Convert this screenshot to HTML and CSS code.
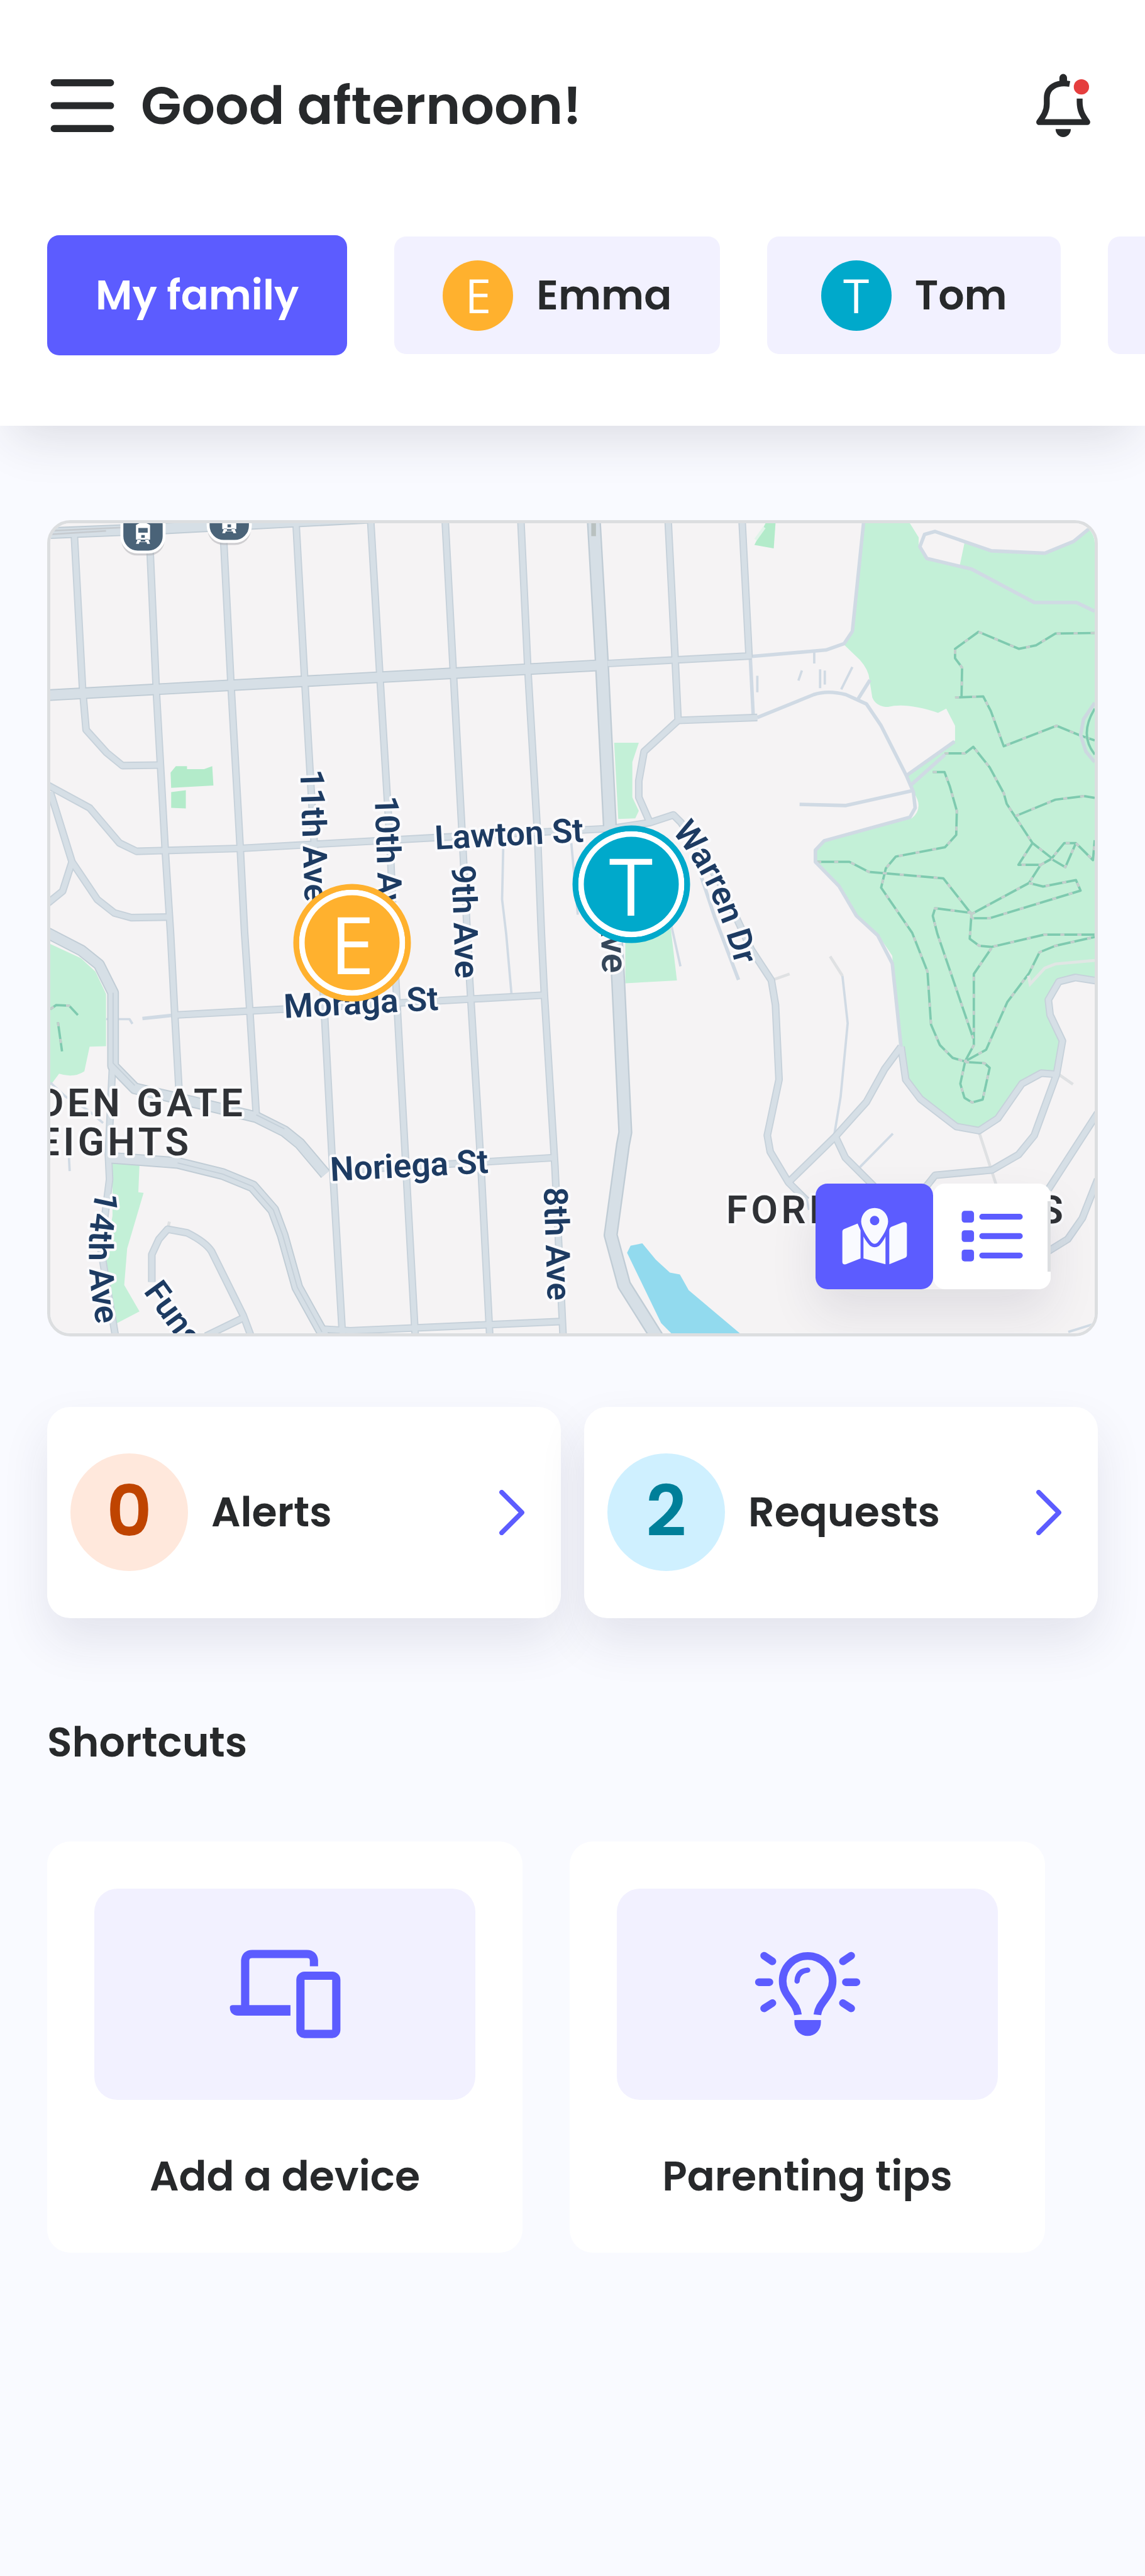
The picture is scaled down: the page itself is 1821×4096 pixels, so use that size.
FILE: index.html
```html
<!DOCTYPE html>
<html lang="en">
<head>
    <meta charset="UTF-8">
    <meta name="viewport" content="width=device-width, initial-scale=1.0">
    <title>My family</title>
    <link rel="stylesheet" href="styles.css">
</head>
<body>
    <header class="header">
        <div class="topbar">
            <button class="icon-btn" aria-label="Menu">
                <svg viewBox="0 0 120 120" fill="none" stroke="#27292b" stroke-width="12" stroke-linecap="round">
                    <path d="M12 21H108M12 60H108M12 99H108"/>
                </svg>
            </button>
            <h1>Good afternoon!</h1>
            <button class="icon-btn" aria-label="Notifications">
                <svg viewBox="10 10 120 120" fill="#27292b">
                    <path d="M64.500 33V22.500a6.500 6.500 0 0 1 13 0V33z"/>
                    <path d="M82 33C60 29 43 39 43 57V67C43 80 37 88 30 98H112C105 88 99 80 99 63V58" fill="none" stroke="#27292b" stroke-width="10" stroke-linejoin="round"/>
                    <path d="M58 110H84a13 13.500 0 0 1-26 0z"/>
                    <circle cx="102" cy="38" r="13" fill="#e53e3e"/>
                </svg>
            </button>
        </div>
        <nav class="tabs">
            <button class="tab active">My family</button>
            <button class="tab"><span class="avatar emma">E</span>Emma</button>
            <button class="tab"><span class="avatar tom">T</span>Tom</button>
            <button class="tab" aria-label="More"></button>
        </nav>
    </header>

    <main>
        <section class="map">
            <svg class="map-canvas" viewBox="85 890 1780 1380" preserveAspectRatio="xMidYMid slice">
                <defs>
                    <path id="warren" d="M1144 1416Q1212 1492 1252 1640"/>
                    <path id="ave14" d="M164 2026Q136 2130 168 2275"/>
                    <g id="tram">
                        <rect x="-37" y="-70" width="74" height="74" rx="27" fill="#a9a9ae" opacity=".5"/>
                        <rect x="-36" y="-75" width="72" height="73" rx="27" fill="#4a6378" stroke="#fff" stroke-width="5"/>
                        <path fill="#fff" fill-rule="evenodd" d="M-12-48Q0-56 12-48V-23H-12zM-8-43V-35H8V-43zM-3-31V-26H3V-31zM-9-24H-4V-20H4V-24H9L12-16H7L6-19H-6L-7-16H-12z"/>
                    </g>
                    <g id="trails">
                        <path d="M1865 1077L1798 1078L1765 1098L1736 1104L1667 1075L1627 1104V1120L1639 1136L1638 1187"/>
                        <path d="M1627 1187L1675 1185L1688 1210L1710 1270L1800 1235L1841 1252L1865 1260"/>
                        <path d="M1609 1282H1644L1658 1271L1686 1306L1710 1350L1715 1368L1759 1435L1791 1460"/>
                        <path d="M1730 1389L1798 1361L1847 1355L1865 1358"/>
                        <path d="M1589 1314H1609L1618 1338L1630 1380L1629 1421L1610 1442L1526 1458L1509 1478L1501 1511L1554 1588L1580 1654L1586 1744L1601 1779L1623 1801L1644 1807"/>
                        <path d="M1392 1467H1447L1480 1484L1607 1495L1655 1556"/>
                        <path d="M1655 1556L1753 1503L1773 1472H1735L1759 1435"/>
                        <path d="M1753 1503L1777 1509L1833 1498L1841 1516L1686 1563H1655"/>
                        <path d="M1773 1472L1791 1462L1813 1435H1833L1815 1476L1791 1462M1833 1435L1862 1464L1865 1430"/>
                        <path d="M1655 1556L1652 1598L1668 1610L1689 1612L1779 1591H1865"/>
                        <path d="M1655 1554L1593 1546L1589 1559L1597 1590L1658 1768"/>
                        <path d="M1689 1614L1659 1658V1779L1644 1807L1680 1787L1716 1706L1753 1657L1771 1621L1798 1610L1865 1595"/>
                        <path d="M1644 1808L1677 1810L1686 1818L1674 1872L1656 1877L1643 1869L1636 1845z"/>
                        <path d="M85 1718L95 1711L117 1712L132 1728M98 1740L105 1790"/>
                    </g>
                    <g id="streets">
                        <path d="M126 911L140 1173L146 1242L181 1281L208 1303L274 1302"/>
                        <path d="M253 890L266 1182L281 1449L290 1590L297 1725L304 1850"/>
                        <path d="M379 890L393 1166L409 1449L416 1586L425 1720L436 1897"/>
                        <path d="M504 893L519 1164L535 1439L553 1739L566 1985L583 2275"/>
                        <path d="M631 885L647 1155L664 1435L674 1673L691 1985L707 2275"/>
                        <path d="M758 885L772 1146L787 1421L800 1673L819 1985L834 2275"/>
                        <path d="M887 885L899 1141L915 1412L922 1590L927 1692L945 1985L959 2275"/>
                        <path d="M1138 885L1150 1123L1155 1226L1097 1279L1088 1329V1357L1106 1398"/>
                        <path d="M1264 885L1276 1118M1035 1129L1280 1116M1155 1226L1290 1221"/>
                        <path d="M80 1336L152 1375L203 1435L232 1449L409 1444L736 1426L1042 1410L1107 1400L1147 1387L1160 1400L1225 1500L1280 1617L1314 1669L1321 1711L1327 1838L1307 1933L1312 1961L1343 2013L1374 2044"/>
                        <path d="M85 1348L122 1467L165 1531L194 1554L223 1562L288 1561M122 1467L106 1517L80 1538"/>
                        <path d="M297 1728L927 1694M566 1994L943 1971"/>
                        <path d="M191 1815L184 1966L186 2008L171 2126L196 2275"/>
                        <path d="M258 2183V2136L270 2110L285 2093L318 2099Q350 2115 360 2131L414 2240L427 2275M414 2244L350 2275M548 2263L596 2266L959 2250"/>
                        <path d="M1535 1782L1543 1838L1568 1871L1629 1918L1668 1925L1700 1904L1741 1845L1774 1827L1800 1829"/>
                        <path d="M1870 1670L1832 1664L1804 1671L1786 1702L1789 1728L1810 1772L1800 1829L1762 1933L1735 1966L1690 1992L1593 2001L1570 2030"/>
                        <path d="M1535 1782L1507 1820L1476 1876L1423 1935L1343 2013M1423 1935L1440 1971L1495 2026"/>
                        <path d="M1870 1895L1786 2025M1870 2008L1844 2074L1819 2110L1780 2134"/>
                    </g>
                    <g id="roads">
                        <path d="M80 907L277 899L640 880M80 1183L1022 1132"/>
                        <path d="M80 1588L138 1618L168 1642L192 1690V1815L229 1853L328 1876L436 1902L484 1926L510 1947L554 1999"/>
                        <path d="M184 1971L302 1980L379 1999L430 2020L465 2060L481 2103L506 2192L552 2275"/>
                    </g>
                    <path id="avenue" d="M1011 880L1025 1127L1039 1412L1053 1673L1065 1928L1061 1949L1040 2103L1063 2188L1124 2285"/>
                </defs>
                <rect x="85" y="890" width="1780" height="1380" fill="#f5f3f4"/>

                <!-- parks and water -->
                <g fill="#c3f0d7">
                    <path d="M1471 890L1452 1074L1438 1097L1465 1123Q1480 1140 1481 1156L1486 1187Q1493 1203 1513 1203Q1544 1195 1598 1213L1612 1206L1627 1235V1260L1547 1320L1556 1348Q1575 1375 1553 1393L1404 1432L1389 1449V1467L1429 1508L1459 1559L1495 1590L1520 1627L1532 1782L1547 1838L1568 1871L1629 1916L1668 1923L1698 1904L1741 1845L1774 1827H1795L1807 1772L1786 1725V1702L1804 1671L1832 1664L1865 1669V900L1853 898L1829 921L1780 941L1689 937L1643 924L1635 962L1579 950L1565 930V914L1550 890z"/>
                    <path d="M85 1607L137 1631L162 1654L180 1692V1781L152 1782L143 1824Q125 1836 100 1828L85 1848z"/>
                    <path d="M191 1980L237 1983L235 2030L244 2031L216 2126L211 2188L237 2233L197 2254L191 2221L176 2159L191 2070z"/>
                    <path d="M1046 1264H1088L1077 1297V1357L1088 1380L1082 1393L1053 1394z"/>
                    <path d="M1065 1560H1140L1153 1669L1065 1674z"/>
                </g>
                <g fill="#b3ebca">
                    <path d="M299 1304H318V1309H347L361 1304L363 1337L291 1341L290 1315z"/>
                    <path d="M291 1348L316 1345V1376L291 1375z"/>
                    <path d="M1304 890H1321L1318 933L1285 927z"/>
                </g>
                <path d="M1302 897L1287 918" stroke="#e2f4ea" stroke-width="5"/>
                <path fill="#92daee" d="M1074 2121L1094 2117L1117 2145L1141 2167L1158 2170L1173 2197L1261 2271H1144L1126 2253L1068 2133z"/>

                <!-- footpaths -->
                <use href="#trails" class="trail"/>
                <use href="#trails" class="trail-dash"/>
                <path d="M1865 1635L1798 1641L1780 1648L1755 1675L1752 1661" fill="none" stroke="#e0e6e4" stroke-width="5"/>
                <path d="M1865 1196L1846 1224L1841 1251L1850 1279L1865 1297" fill="none" stroke="#cdd8e0" stroke-width="6"/>
                <path d="M1865 1206Q1838 1250 1865 1284" fill="none" stroke="#7ecaaf" stroke-width="4"/>

                <!-- lanes -->
                <g class="lane">
                    <path d="M1862 894L1829 921L1780 941L1689 937L1593 904L1575 909L1567 930L1579 950L1655 968L1762 1025H1834L1865 1040"/>
                    <path d="M1471 890L1452 1074L1438 1095L1407 1106L1280 1117M1278 1118L1283 1217"/>
                    <path d="M1290 1221L1386 1182Q1410 1174 1441 1182L1476 1198L1501 1235L1544 1320L1556 1348L1559 1375L1550 1391L1404 1431L1389 1447V1467L1429 1508L1459 1559L1495 1592L1520 1640L1535 1782"/>
                    <path d="M1362 1369L1441 1371L1553 1346M1544 1320L1626 1262M1552 1336L1610 1284M1482 1157L1462 1189"/>
                    <path d="M1186 1467L1217 1560L1258 1668M242 1734L297 1728"/>
                </g>
                <g class="lane thin">
                    <path d="M1387 1109V1129M1397 1139V1171M1405 1141V1165M1452 1135L1433 1173M1366 1141L1360 1158M1290 1150V1178"/>
                    <path d="M857 1440L855 1531L862 1590L871 1692M973 1435L984 1557M1140 1560L1159 1645"/>
                    <path d="M1435 1661L1444 1742L1432 1867L1421 1933M1521 1930L1465 1987"/>
                    <path d="M85 1843L111 1867L149 1890L175 1912M115 1937L118 1994M180 1735H220L225 1743M1374 2041L1378 2060M1820 2268L1865 2254"/>
                </g>
                <path class="lane service" d="M1414 1628L1435 1661M1668 1928L1698 2020M1314 1669L1345 1658M1802 1828L1828 1846M285 2093L288 2080"/>

                <!-- streets: outline first, then fill -->
                <use href="#streets" class="street"/>
                <use href="#roads" class="road"/>
                <use href="#avenue" class="avenue"/>
                <use href="#streets" class="street-fill"/>
                <use href="#roads" class="road-fill"/>
                <use href="#avenue" class="avenue-fill"/>
                <path d="M85 903L277 894M85 909L180 903" stroke="#c6cbd0" stroke-width="3"/>
                <path d="M192 1690V1810L229 1848M436 1898L484 1922M302 1980L379 1999L430 2020L465 2060L481 2103L506 2192L548 2268" fill="none" stroke="#c5d0d9" stroke-width="2"/>
                <path d="M1011 890V912" stroke="#b9c1c0" stroke-width="8"/>

                <use href="#tram" x="243" y="941"/>
                <use href="#tram" x="390" y="923"/>

                <g class="street-name">
                    <text transform="translate(741 1446) rotate(-3)">Lawton St</text>
                    <text transform="translate(511 1310) rotate(88)">11th Ave</text>
                    <text transform="translate(638 1355) rotate(88)">10th Ave</text>
                    <text transform="translate(769 1473) rotate(88)">9th Ave</text>
                    <text transform="translate(484 1733) rotate(-3)">Moraga St</text>
                    <text transform="translate(563 2011) rotate(-3)">Noriega St</text>
                    <text transform="translate(926 2022) rotate(88)">8th Ave</text>
                    <text transform="translate(243 2199) rotate(54)">Funston Ave</text>
                    <text class="main-name" transform="translate(1026 1657) rotate(88)">7th Ave</text>
                    <text><textPath href="#warren">Warren Dr</textPath></text>
                    <text><textPath href="#ave14">1<tspan dx="6">4th Ave</tspan></textPath></text>
                </g>
                <g class="district">
                    <text class="end" x="419" y="1901">GOLDEN GATE</text>
                    <text class="end" x="327" y="1967">HEIGHTS</text>
                    <text x="1237" y="2083">FOREST KNOLLS</text>
                </g>
            </svg>
            <button class="marker marker-emma emma">E</button>
            <button class="marker marker-tom tom">T</button>
            <div class="view-toggle">
                <button class="view-btn selected" aria-label="Map view">
                    <svg viewBox="70 60 120 110" fill="#f9faff">
                        <path d="M75 108Q75 104 78 103L101 93.500L106 105V153L81 163Q75 164 75 159z"/>
                        <path d="M111 115.500C114 122 120 129 123 132Q130 136 137 132C140 129 146 122 148.500 115.500V163L111 153z"/>
                        <path d="M155 106Q155 101 159 99L178 91.500Q185 90 185 96V147Q185 151 182 152L155 163z"/>
                        <path fill-rule="evenodd" d="M130 67A23 23 0 0 1 153 90C153 100 143 117 135 126Q130 130 125 126C117 117 107 100 107 90A23 23 0 0 1 130 67zM130 80.500A8 8 0 0 0 130 96.500A8 8 0 0 0 130 80.500z"/>
                    </svg>
                </button>
                <button class="view-btn list" aria-label="List view">
                    <svg viewBox="270 60 120 110" fill="#5c5cff">
                        <rect x="278" y="72" width="21" height="20" rx="5"/>
                        <rect x="278" y="105" width="21" height="20" rx="5"/>
                        <rect x="278" y="138" width="21" height="20" rx="5"/>
                        <rect x="308" y="77" width="74" height="10" rx="5"/>
                        <rect x="308" y="110" width="74" height="10" rx="5"/>
                        <rect x="308" y="143" width="74" height="10" rx="5"/>
                    </svg>
                </button>
            </div>
        </section>

        <section class="stats">
            <a class="stat" href="#alerts">
                <span class="count alerts">0</span>
                <span class="stat-name">Alerts</span>
                <svg class="chevron" viewBox="0 0 42 76"><path d="M4 4L38 38L4 72"/></svg>
            </a>
            <a class="stat" href="#requests">
                <span class="count requests">2</span>
                <span class="stat-name">Requests</span>
                <svg class="chevron" viewBox="0 0 42 76"><path d="M4 4L38 38L4 72"/></svg>
            </a>
        </section>

        <h2>Shortcuts</h2>
        <section class="shortcuts">
            <a class="shortcut" href="#device">
                <span class="tile">
                    <svg viewBox="5 -5 200 200" fill="none" stroke="#5c5cff" stroke-width="14">
                        <path d="M37 116V38Q38 27 49 27H142Q153 27 154 38V48"/>
                        <path d="M16 114H114V132H25Q11 131 11 118Q11 114 16 114z" fill="#5c5cff" stroke="none"/>
                        <rect x="131" y="64" width="61" height="99" rx="7"/>
                    </svg>
                </span>
                <span class="shortcut-name">Add a device</span>
            </a>
            <a class="shortcut" href="#tips">
                <span class="tile">
                    <svg viewBox="5 -5 200 200" fill="none" stroke="#5c5cff" stroke-width="13">
                        <path d="M88.500 130.500C86 108 62.500 99 62.500 73A42.500 42.500 0 0 1 147.500 73C147.500 99 124 108 121.500 130.500"/>
                        <path d="M87 73Q88 56 105 54.500" stroke-width="9" stroke-linecap="round"/>
                        <path d="M82.500 139.500H127.500V144A22.500 22.500 0 0 1 82.500 144z" fill="#5c5cff" stroke="none"/>
                        <path d="M31 30L45 39.500M22 75H40M31 119.500L45 110.500M179 30L165 39.500M170 75H188M179 119.500L165 110.500" stroke-linecap="round"/>
                    </svg>
                </span>
                <span class="shortcut-name">Parenting tips</span>
            </a>
        </section>
    </main>
</body>
</html>
```
FILE: styles.css
```css
* {
    box-sizing: border-box;
}
body {
    margin: 0;
    min-height: 100vh;
    font-family: Poppins, Inter, sans-serif;
    font-size: 65px;
    font-weight: 600;
    line-height: 98px;
    color: #27292b;
    background-color: #f9faff;
    overflow-x: hidden;
}
button {
    padding: 0;
    border: none;
    background: none;
    font: inherit;
    color: inherit;
    cursor: pointer;
}
a {
    color: inherit;
    text-decoration: none;
}
svg {
    display: block;
}

/* Header */
.header {
    padding: 112px 0 112px 75px;
    background-color: white;
    box-shadow: 0 37px 75px -19px rgba(39, 41, 60, 0.14);
}
.topbar {
    display: flex;
    align-items: center;
    gap: 37px;
    padding-right: 75px;
}
.topbar h1 {
    flex: 1;
    margin: 0;
    font-size: 84px;
    font-weight: 600;
    line-height: 112px;
}
.icon-btn svg {
    width: 112px;
    height: 112px;
}
.tabs {
    display: flex;
    align-items: center;
    gap: 75px;
    height: 191px;
    margin-top: 150px;
    overflow: hidden;
}
.tab {
    display: flex;
    flex: none;
    align-items: center;
    justify-content: center;
    gap: 37px;
    min-width: 467px;
    height: 187px;
    padding: 0 77px;
    border-radius: 19px;
    background-color: #f2f1ff;
}
.tab.active {
    height: 191px;
    color: white;
    background-color: #5c5cff;
}
.avatar {
    width: 112px;
    height: 112px;
    border-radius: 50%;
    font-family: "Open Sans", sans-serif;
    font-size: 75px;
    font-weight: 400;
    line-height: 110px;
    text-align: center;
    color: white;
}
.emma {
    background-color: #ffb12e;
}
.tom {
    background-color: #00a9cb;
}

main {
    padding: 150px 75px 75px;
}

/* Map */
.map {
    position: relative;
    border: 5px solid #dcdee0;
    border-radius: 37px;
    overflow: hidden;
}
.map-canvas {
    width: 100%;
    height: auto;
}
.trail,
.trail-dash,
.lane,
.street,
.street-fill,
.road,
.road-fill,
.avenue,
.avenue-fill {
    fill: none;
    stroke-linejoin: round;
}
.trail {
    stroke: #7ecaaf;
    stroke-width: 4px;
}
.trail-dash {
    stroke: #c3cfcc;
    stroke-width: 4px;
    stroke-dasharray: 7 22;
}
.lane {
    stroke: #d0dae4;
    stroke-width: 6px;
}
.lane.thin {
    stroke-width: 4px;
}
.lane.service {
    stroke: #dfe1e3;
    stroke-width: 5px;
}
.street {
    stroke: #c6d1da;
    stroke-width: 13px;
}
.street-fill {
    stroke: #d6dfe6;
    stroke-width: 9px;
}
.road {
    stroke: #c0ccd5;
    stroke-width: 20px;
}
.road-fill {
    stroke: #d6dfe6;
    stroke-width: 16px;
}
.avenue {
    stroke: #c0ccd5;
    stroke-width: 24px;
}
.avenue-fill {
    stroke: #d6dfe6;
    stroke-width: 19px;
}
.street-name {
    font-family: Roboto, sans-serif;
    font-size: 57px;
    font-weight: 600;
    fill: #1d3b62;
    stroke: #fafafc;
    stroke-width: 9px;
    stroke-linejoin: round;
    paint-order: stroke;
}
.main-name {
    font-size: 62px;
    fill: #35475a;
    text-anchor: end;
}
.district {
    font-family: Roboto, sans-serif;
    font-size: 66px;
    font-weight: 600;
    letter-spacing: 6px;
    fill: #303236;
    stroke: #fafafc;
    stroke-width: 9px;
    stroke-linejoin: round;
    paint-order: stroke;
}
.district .end {
    text-anchor: end;
}
.marker {
    position: absolute;
    width: 187px;
    height: 187px;
    border-radius: 50%;
    box-shadow: inset 0 0 0 9px currentColor;
    font-family: "Open Sans", sans-serif;
    font-size: 127px;
    font-weight: 400;
    line-height: 157px;
    text-align: center;
    color: white;
    transform: translate(-50%, -50%);
}
.marker-emma {
    left: 28.9%;
    top: 51.8%;
    border: 9px solid #ffb12e;
}
.marker-tom {
    left: 55.6%;
    top: 44.6%;
    border: 9px solid #00a9cb;
}
.view-toggle {
    position: absolute;
    right: 70px;
    bottom: 70px;
    display: flex;
    border-radius: 19px;
    box-shadow: 0 37px 75px rgba(39, 41, 80, 0.1);
}
.view-btn {
    display: flex;
    align-items: center;
    justify-content: center;
    width: 187px;
    height: 168px;
    border-radius: 19px;
    background-color: white;
}
.view-btn.selected {
    background-color: #5c5cff;
}
.view-btn.list {
    background-image: linear-gradient(#dcdee0, #dcdee0);
    background-position: right center;
    background-repeat: no-repeat;
    background-size: 5px 112px;
}
.view-btn svg {
    width: 112px;
    height: 103px;
}

/* Alerts and requests */
.stats {
    display: grid;
    grid-template-columns: 1fr 1fr;
    gap: 37px;
    margin-top: 112px;
}
.stat {
    display: flex;
    align-items: center;
    gap: 37px;
    height: 336px;
    padding: 0 58px 0 37px;
    border-radius: 37px;
    background-color: white;
    box-shadow: 0 37px 75px rgba(39, 41, 80, 0.1);
}
.count {
    width: 187px;
    height: 187px;
    border-radius: 50%;
    font-size: 112px;
    line-height: 184px;
    text-align: center;
}
.alerts {
    color: #bf4400;
    background-color: #ffe8dc;
}
.requests {
    color: #007f99;
    background-color: #cff0ff;
}
.stat-name {
    flex: 1;
}
.chevron {
    width: 40px;
    height: 72px;
    fill: none;
    stroke: #5c5cff;
    stroke-width: 8px;
    stroke-linecap: round;
    stroke-linejoin: round;
}

/* Shortcuts */
h2 {
    margin: 149px 0 108px;
    font-size: 65px;
    font-weight: 600;
    line-height: 98px;
}
.shortcuts {
    display: flex;
    gap: 75px;
}
.shortcut {
    flex: 0 0 756px;
    padding: 75px 75px 72px;
    border-radius: 37px;
    background-color: white;
    text-align: center;
}
.tile {
    display: flex;
    align-items: center;
    justify-content: center;
    height: 336px;
    margin-bottom: 73px;
    border-radius: 37px;
    background-color: #f2f1ff;
}
.tile svg {
    width: 187px;
    height: 187px;
}
```
